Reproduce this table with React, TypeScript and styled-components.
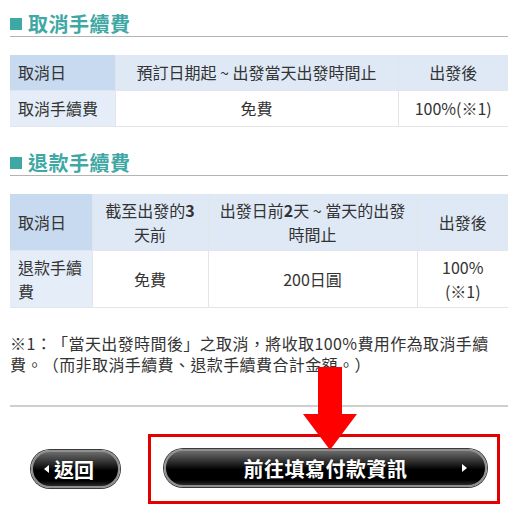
import React from "react";
import styled, { createGlobalStyle } from "styled-components";

const Global = createGlobalStyle`
  html, body { margin: 0; padding: 0; background: #fff; }
  body {
    font-family: "Microsoft JhengHei", "Noto Sans CJK TC", "Noto Sans", sans-serif;
    color: #333;
    text-spacing-trim: space-all;
  }
`;

const Page = styled.div`
  width: 520px;
  padding: 0 12px 0 10px;
  box-sizing: border-box;
  position: relative;
`;

const Heading = styled.h2<{ $top: number }>`
  margin: ${(p) => p.$top}px 0 0;
  font-size: 20px;
  line-height: 24px;
  font-weight: 700;
  color: #3fa8a5;
  border-bottom: 1px solid #b4b4b4;
  display: flex;
  align-items: center;
  gap: 6px;
  letter-spacing: 0.5px;
`;

const Square = styled.span`
  width: 12px;
  height: 12px;
  background: #3fa8a5;
  display: inline-block;
`;

const Table = styled.table`
  width: 100%;
  margin-top: 18px;
  border-collapse: collapse;
  font-size: 16px;
  color: #333;
  td, th {
    border: 1px solid #e2e6ea;
    font-weight: 400;
    padding: 4px 6px;
    line-height: 24px;
    box-sizing: border-box;
  }
  tr:first-child td, tr:first-child th { border-top: none; }
  td:first-child, th:first-child { border-left: none; }
  td:last-child, th:last-child { border-right: none; }
`;

const HeadCell = styled.th<{ $w: number; $corner?: boolean }>`
  width: ${(p) => p.$w}px;
  background: ${(p) => (p.$corner ? "#c8daef" : "#dfe9f6")};
  text-align: ${(p) => (p.$corner ? "left" : "center")};
  padding-left: ${(p) => (p.$corner ? "8px" : "6px")} !important;
`;

const LabelCell = styled.td`
  background: #e4edf8;
  text-align: left;
  padding-left: 8px !important;
`;

const DataCell = styled.td`
  background: #fff;
  text-align: center;
`;

const Row = styled.tr<{ $h: number }>`
  height: ${(p) => p.$h}px;
`;

const Note = styled.p`
  margin: 25px 0 0;
  font-size: 16px;
  line-height: 21px;
  letter-spacing: 0.4px;
  color: #333;
`;

const Rule = styled.hr`
  margin: 30px 0 0;
  border: none;
  border-top: 2px solid #cfcfcf;
`;

const ButtonRow = styled.div`
  display: flex;
  align-items: center;
  padding-left: 21px;
  margin-top: 27px;
  gap: 28px;
`;

const Highlight = styled.div`
  border: 3px solid #e30000;
  padding: 12px 10px 14px 13px;
  display: flex;
`;

const PillButton = styled.button<{ $w: number }>`
  width: ${(p) => p.$w}px;
  height: 38px;
  border-radius: 19px;
  border: 2px solid #8f8f8f;
  box-shadow: 0 0 0 1px #3a3a3a;
  background: linear-gradient(#6b6b6b 0%, #1e1e1e 40%, #000 55%, #000 85%, #2a2a2a 100%);
  color: #fff;
  font-family: inherit;
  font-size: 20px;
  font-weight: 700;
  display: flex;
  align-items: center;
  padding: 0;
  position: relative;
  cursor: pointer;
`;

const Label = styled.span`
  flex: 1;
  text-align: center;
  letter-spacing: 0.5px;
`;

const Tri = styled.span<{ $dir: "left" | "right" }>`
  width: 0;
  height: 0;
  border-top: 4px solid transparent;
  border-bottom: 4px solid transparent;
  ${(p) => (p.$dir === "left" ? "border-right: 5px solid #fff;" : "border-left: 5px solid #fff;")}
`;

const NextTri = styled(Tri)`
  position: absolute;
  right: 18px;
`;

const BackInner = styled.span`
  display: flex;
  align-items: center;
  gap: 5px;
  margin-left: 11px;
`;

const Arrow = styled.svg`
  position: absolute;
  left: 303px;
  top: 355px;
`;

export default function App() {
  return (
    <Page>
      <Global />
      <Heading $top={12}>
        <Square />
        取消手續費
      </Heading>
      <Table>
        <tbody>
          <Row $h={35}>
            <HeadCell $w={105} $corner>取消日</HeadCell>
            <HeadCell $w={283}>預訂日期起 ~ 出發當天出發時間止</HeadCell>
            <HeadCell $w={110}>出發後</HeadCell>
          </Row>
          <Row $h={36}>
            <LabelCell>取消手續費</LabelCell>
            <DataCell>免費</DataCell>
            <DataCell>100%(※1)</DataCell>
          </Row>
        </tbody>
      </Table>

      <Heading $top={24}>
        <Square />
        退款手續費
      </Heading>
      <Table>
        <tbody>
          <Row $h={57}>
            <HeadCell $w={82} $corner>取消日</HeadCell>
            <HeadCell $w={116}>
              截至出發的<b>3</b>天前
            </HeadCell>
            <HeadCell $w={209}>
              出發日前<b>2</b>天 ~ 當天的出發時間止
            </HeadCell>
            <HeadCell $w={91}>出發後</HeadCell>
          </Row>
          <Row $h={55}>
            <LabelCell>退款手續費</LabelCell>
            <DataCell>免費</DataCell>
            <DataCell>200日圓</DataCell>
            <DataCell>
              100%
              <br />
              (※1)
            </DataCell>
          </Row>
        </tbody>
      </Table>

      <Note>
        ※1：「當天出發時間後」之取消，將收取100%費用作為取消手續費。（而非取消手續費、退款手續費合計金額。）
      </Note>

      <Rule />

      <ButtonRow>
        <PillButton $w={89}>
          <BackInner>
            <Tri $dir="left" />
            返回
          </BackInner>
        </PillButton>
        <Highlight>
          <PillButton $w={323}>
            <Label>前往填寫付款資訊</Label>
            <NextTri $dir="right" />
          </PillButton>
        </Highlight>
      </ButtonRow>

      <Arrow width="54" height="84" viewBox="0 0 54 84">
        <rect x="15" y="0" width="24" height="48" fill="#ff0000" />
        <polygon points="0,47 54,47 27,83" fill="#ff0000" />
      </Arrow>
    </Page>
  );
}
